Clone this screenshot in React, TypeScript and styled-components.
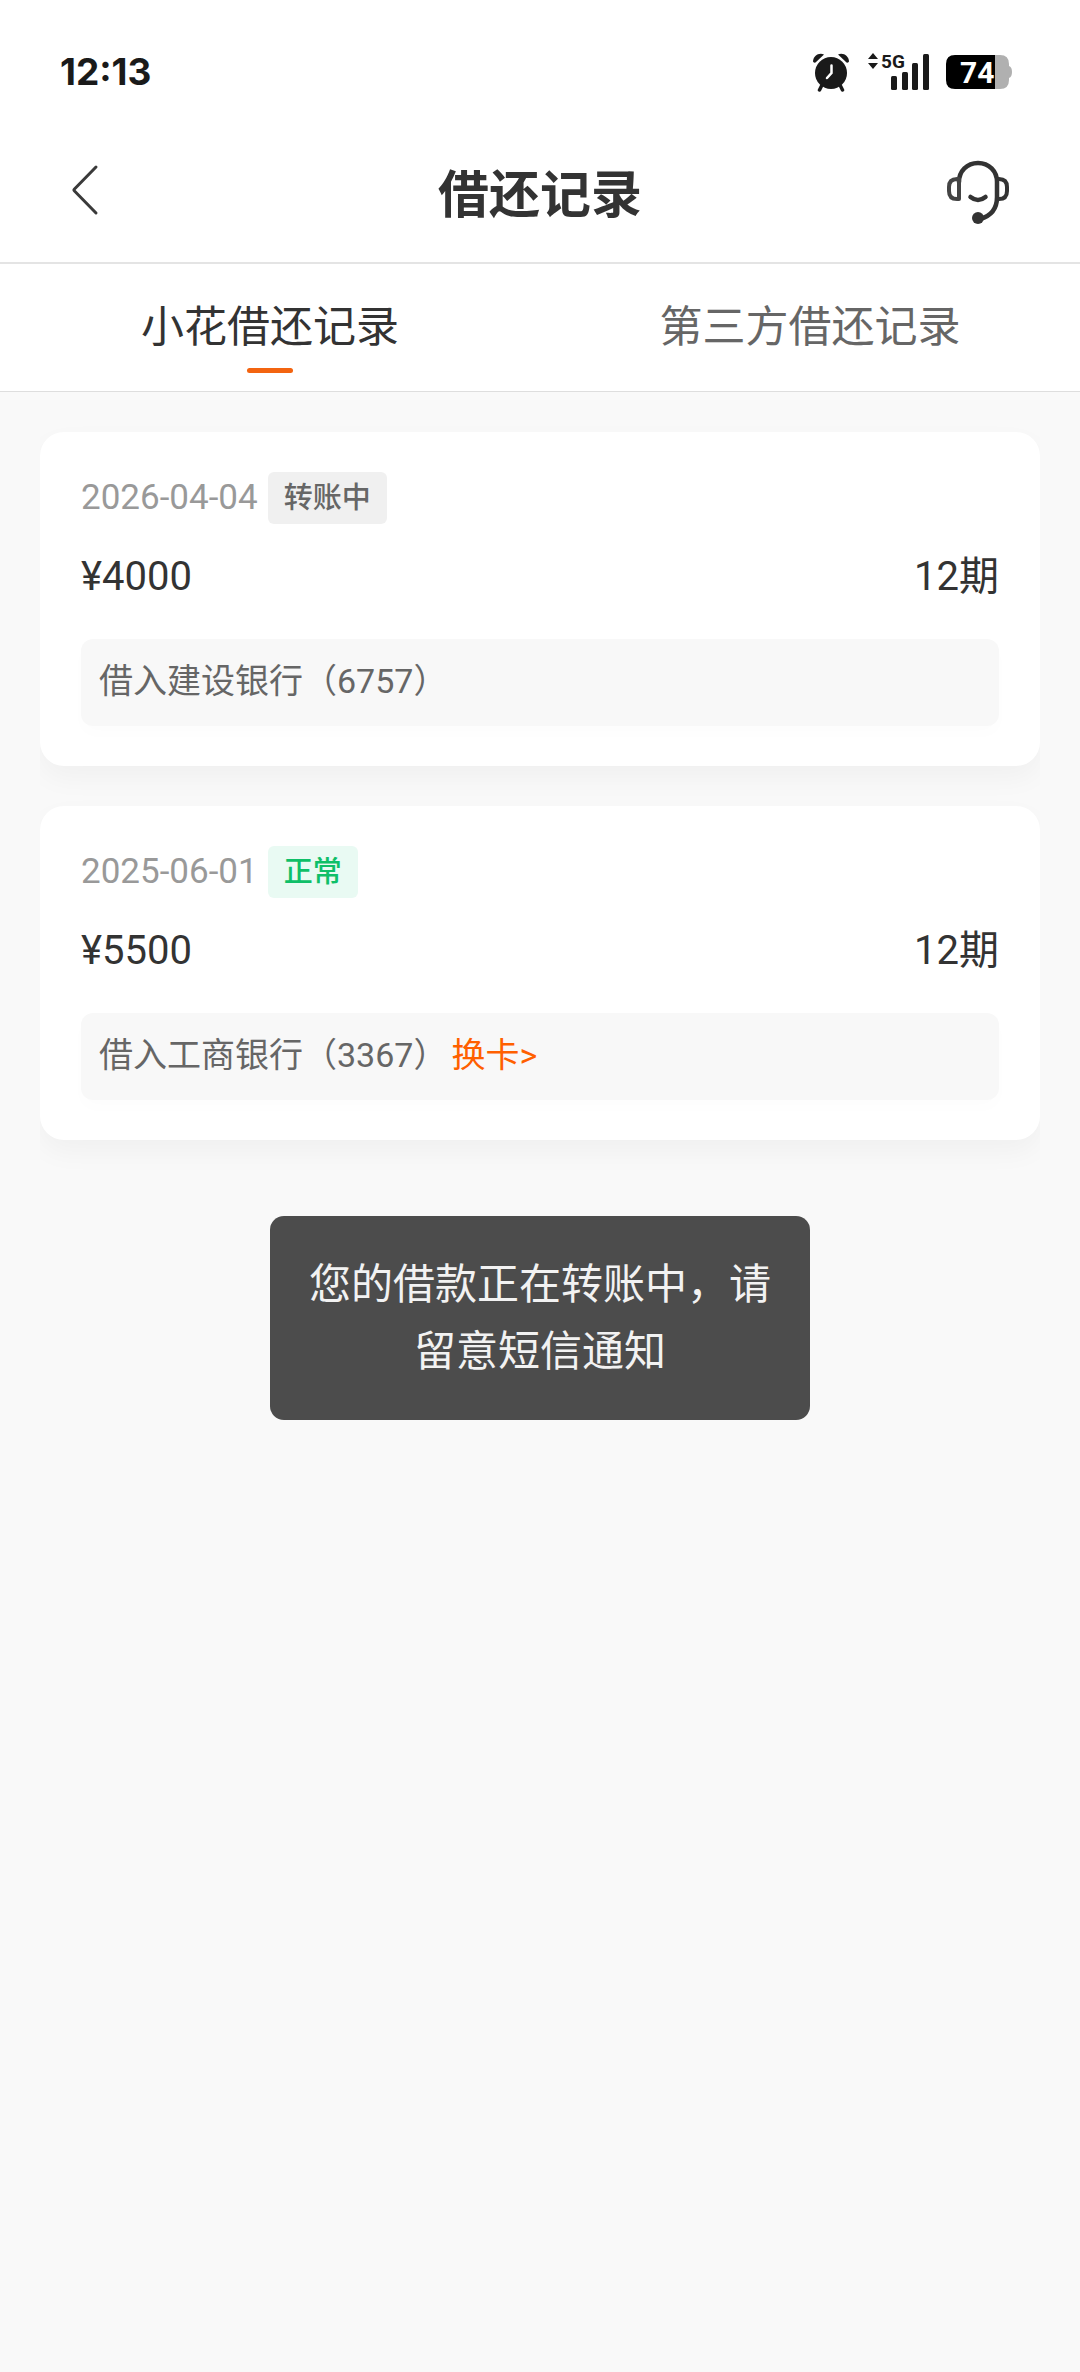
import React, { useState } from "react";
import styled, { createGlobalStyle } from "styled-components";

const GlobalStyle = createGlobalStyle`
  *, *::before, *::after { box-sizing: border-box; }
  body {
    margin: 0;
    background: #f9f9f9;
    color: #333;
    font-family: Roboto, "Noto Sans CJK SC", sans-serif;
  }
  button { font: inherit; color: inherit; background: none; border: 0; padding: 0; cursor: pointer; }
`;

const Page = styled.div`
  display: flex;
  flex-direction: column;
  min-height: 100vh;
`;

const Top = styled.header`
  background: #fff;
  border-bottom: 2px solid #e4e4e4;
`;

const StatusBar = styled.div`
  display: flex;
  align-items: center;
  justify-content: space-between;
  height: 118px;
  padding: 26px 68px 0 60px;
`;

const Clock = styled.time`
  font: 700 37px/44px Inter, Roboto, sans-serif;
  color: #1a1a1a;
`;

const StatusIcons = styled.div`
  display: flex;
  align-items: center;
  gap: 16px;
  svg { display: block; }
`;

const NavBar = styled.nav`
  display: grid;
  grid-template-columns: 64px 1fr 64px;
  align-items: center;
  height: 144px;
  padding: 0 70px 0 64px;
`;

const IconButton = styled.button<{ $end?: boolean }>`
  display: flex;
  align-items: center;
  justify-content: ${(p) => (p.$end ? "flex-end" : "flex-start")};
  height: 64px;
`;

const Title = styled.h1`
  margin: 0;
  padding: 12px 0 0 6px;
  font-size: 51px;
  line-height: 64px;
  font-weight: 700;
  text-align: center;
`;

const Body = styled.main`
  position: relative;
  flex: 1;
`;

const Tabs = styled.div`
  display: flex;
  height: 128px;
  background: #fff;
  border-bottom: 1px solid #dedede;
`;

const Tab = styled.button<{ $active: boolean }>`
  display: flex;
  flex: 1;
  flex-direction: column;
  align-items: center;
  padding-top: 33px;
  font-size: 43px;
  line-height: 60px;
  color: ${(p) => (p.$active ? "#333" : "#666")};

  &::after {
    content: "";
    width: 46px;
    height: 5px;
    margin-top: 11px;
    border-radius: 3px;
    background: ${(p) => (p.$active ? "#f36410" : "transparent")};
  }
`;

const RecordList = styled.ul`
  display: flex;
  flex-direction: column;
  gap: 40px;
  margin: 0 40px;
  padding: 40px 0;
  list-style: none;
  overflow: hidden;
`;

const Card = styled.li`
  padding: 40px 41px;
  background: #fff;
  border-radius: 24px;
  box-shadow: 0 12px 28px rgba(0, 0, 0, 0.04);
`;

const CardHead = styled.div`
  display: flex;
  align-items: center;
  gap: 10px;
`;

const DateText = styled.time`
  font-size: 35px;
  line-height: 48px;
  color: #999;
`;

const Badge = styled.span<{ $tone: "pending" | "normal" }>`
  padding: 0 16px;
  border-radius: 6px;
  font-size: 29px;
  line-height: 52px;
  font-weight: 500;
  color: ${(p) => (p.$tone === "normal" ? "#0fbf68" : "#666")};
  background: ${(p) => (p.$tone === "normal" ? "#e9faf3" : "#f0f0f0")};
`;

const AmountRow = styled.div`
  display: flex;
  justify-content: space-between;
  padding: 23px 0 32px;
  font-size: 40px;
  line-height: 60px;
`;

const BankRow = styled.div`
  padding: 16px 18px 19px;
  border-radius: 12px;
  background: #f8f8f8;
  box-shadow: 0 8px 16px rgba(0, 0, 0, 0.01);
  font-size: 34px;
  line-height: 52px;
  color: #666;
`;

const CardLink = styled.a`
  margin-left: 4px;
  color: #ff6000;
  text-decoration: none;
`;

const ToastLayer = styled.div`
  position: absolute;
  inset: 0;
  display: flex;
  align-items: center;
  justify-content: center;
  pointer-events: none;
`;

const Toast = styled.div`
  width: 50%;
  padding: 35px 38px;
  border-radius: 14px;
  background: #4c4c4c;
  color: #f2f2f2;
  font-size: 42px;
  line-height: 67px;
  text-align: center;
`;

const AlarmIcon = () => (
  <svg width="38" height="40" viewBox="0 0 38 40" aria-label="闹钟" role="img">
    <g fill="#1a1a1a">
      <circle cx="19" cy="21" r="16" />
      <path d="M1 9.500C1 4 7 0 12 2.500L3.500 10.500Q1.500 11 1 9.500Z" />
      <path d="M37 9.500C37 4 31 0 26 2.500L34.500 10.500Q36.500 11 37 9.500Z" />
    </g>
    <path d="M9.500 34 7.500 38M28.500 34 30.500 38" stroke="#1a1a1a" strokeWidth="3.500" strokeLinecap="round" />
    <path d="M19.500 13.500V21L15 26" fill="none" stroke="#fff" strokeWidth="2.500" strokeLinecap="round" />
  </svg>
);

const SignalIcon = () => (
  <svg width="64" height="56" viewBox="0 -8 64 56" aria-label="信号" role="img">
    <g fill="#1a1a1a">
      <path d="M7 1 12 7H2ZM7 17 12 11H2Z" />
      <rect x="25" y="24" width="6" height="14" rx="1.500" />
      <rect x="36" y="20" width="6" height="18" rx="1.500" />
      <rect x="46" y="11" width="6" height="27" rx="1.500" />
      <rect x="57" y="2" width="6" height="36" rx="1.500" />
      <text x="15" y="16" fontSize="19" fontWeight="700" fontFamily="Roboto, sans-serif">5G</text>
    </g>
  </svg>
);

const BatteryIcon = () => (
  <svg width="66" height="50" viewBox="0 -8 66 50" aria-label="电量 74%" role="img">
    <path d="M49 0H54Q63 0 63 9V11Q66 12 66 17T63 23V25Q63 34 54 34H49Z" fill="#b0b0b0" />
    <path d="M9 0H49V34H9Q0 34 0 25V9Q0 0 9 0Z" fill="#000" />
    <text x="14" y="28" fontSize="30" fontWeight="700" fontFamily="Roboto, sans-serif" fill="#fff">74</text>
  </svg>
);

const BackIcon = () => (
  <svg width="40" height="56" viewBox="0 0 40 56" aria-hidden="true">
    <path d="M32 5 10.500 27Q9.500 28 10.500 29L32 51" fill="none" stroke="#3a3a3a" strokeWidth="3" strokeLinecap="round" strokeLinejoin="round" />
  </svg>
);

const HeadsetIcon = () => (
  <svg width="64" height="68" viewBox="0 -3 64 68" aria-hidden="true">
    <g fill="none" stroke="#333" strokeWidth="4.500" strokeLinecap="round" strokeLinejoin="round">
      <path d="M13 23C13 12 21 4 32 4S51 12 51 23V38C51 50 45 57 34 60" />
      <path d="M13 20V40H11Q3 40 3 32V28Q3 20 11 20Z" stroke="#444" strokeWidth="4" />
      <path d="M51 20H53Q61 20 61 28V32Q61 40 53 40H51Z" strokeWidth="4" />
      <path d="M24.500 38Q32 44 39.500 38" />
    </g>
    <circle cx="32" cy="59" r="6" fill="#333" />
  </svg>
);

interface LoanRecord {
  date: string;
  status: string;
  tone: "pending" | "normal";
  amount: string;
  term: string;
  bank: string;
  action?: string;
}

const records: LoanRecord[] = [
  { date: "2026-04-04", status: "转账中", tone: "pending", amount: "¥4000", term: "12期", bank: "借入建设银行（6757）" },
  { date: "2025-06-01", status: "正常", tone: "normal", amount: "¥5500", term: "12期", bank: "借入工商银行（3367）", action: "换卡>" },
];

const tabs = ["小花借还记录", "第三方借还记录"];

export default function App() {
  const [active, setActive] = useState(0);
  return (
    <Page>
      <GlobalStyle />
      <Top>
        <StatusBar>
          <Clock>12:13</Clock>
          <StatusIcons>
            <AlarmIcon />
            <SignalIcon />
            <BatteryIcon />
          </StatusIcons>
        </StatusBar>
        <NavBar>
          <IconButton aria-label="返回"><BackIcon /></IconButton>
          <Title>借还记录</Title>
          <IconButton $end aria-label="客服"><HeadsetIcon /></IconButton>
        </NavBar>
      </Top>
      <Body>
        <Tabs role="tablist">
          {tabs.map((label, i) => (
            <Tab key={label} role="tab" aria-selected={active === i} $active={active === i} onClick={() => setActive(i)}>
              {label}
            </Tab>
          ))}
        </Tabs>
        <RecordList>
          {records.map((r) => (
            <Card key={r.date}>
              <CardHead>
                <DateText>{r.date}</DateText>
                <Badge $tone={r.tone}>{r.status}</Badge>
              </CardHead>
              <AmountRow>
                <span>{r.amount}</span>
                <span>{r.term}</span>
              </AmountRow>
              <BankRow>
                {r.bank}
                {r.action && <CardLink href="#card">{r.action}</CardLink>}
              </BankRow>
            </Card>
          ))}
        </RecordList>
        <ToastLayer>
          <Toast role="status">您的借款正在转账中，请留意短信通知</Toast>
        </ToastLayer>
      </Body>
    </Page>
  );
}
